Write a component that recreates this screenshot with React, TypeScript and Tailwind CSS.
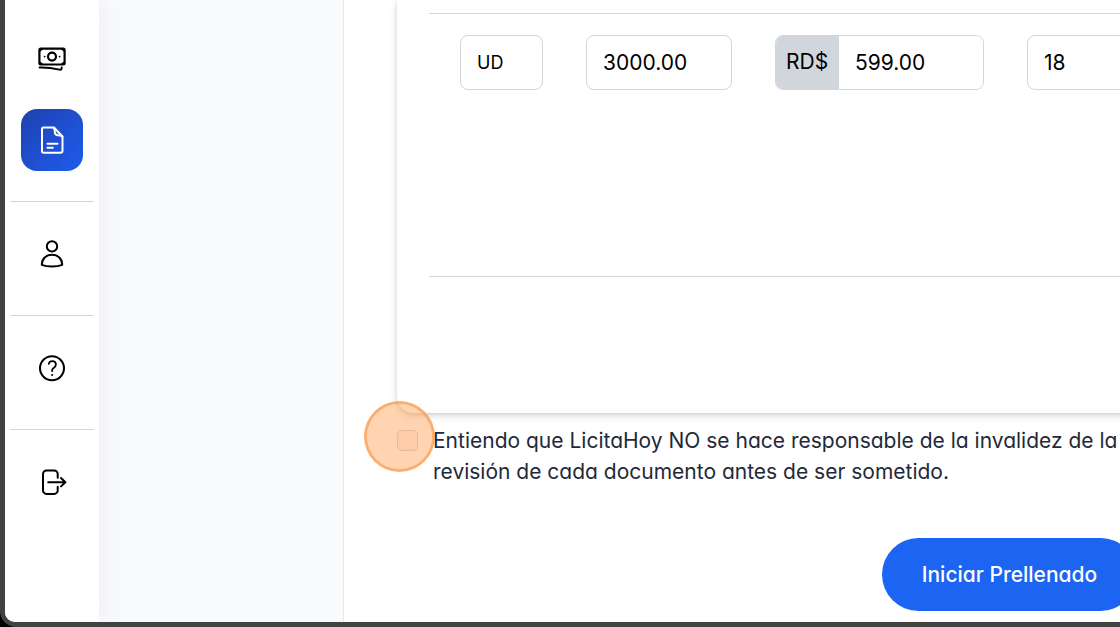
import React from "react";

type IconProps = { children: React.ReactNode };

function Icon({ children }: IconProps) {
  return (
    <svg
      viewBox="0 0 32 32"
      className="size-8"
      fill="none"
      stroke="currentColor"
      strokeWidth="2"
      strokeLinecap="round"
      strokeLinejoin="round"
      aria-hidden="true"
    >
      {children}
    </svg>
  );
}

function BanknotesIcon() {
  return (
    <Icon>
      <rect x="3.4" y="5.7" width="25.2" height="15.8" rx="1.4" strokeWidth="2.2" />
      <path d="M4.2 7.6 6 6.2M27.8 7.6 26 6.2M4.2 19.6 6 21M27.8 19.6 26 21" strokeWidth="1.6" />
      <circle cx="16" cy="13.6" r="4" strokeWidth="2.2" />
      <path d="M8.6 13.6h.01M23.6 13.6h.01" strokeWidth="1.8" />
      <path d="M3.6 24.4c7.6-.2 14 .8 20 2.2 1.300.3 2.100-.3 2.100-1.500v-.5" />
    </Icon>
  );
}

function DocumentIcon() {
  return (
    <Icon>
      <path d="M7.5 3.500H18l8.500 9v14.200a2 2 0 0 1-2 2h-17a1.500 1.500 0 0 1-1.500-1.500V5a1.500 1.500 0 0 1 1.500-1.500Z" />
      <path d="M17.500 3.700c1 1 1.300 2.200 1.300 3.800 0 2.300.9 3.800 3.200 3.800 2 0 3.600.1 4.300 1.400" />
      <path d="M11.500 19.700h10M11.500 23.700h5.400" />
    </Icon>
  );
}

function UserIcon() {
  return (
    <Icon>
      <circle cx="16" cy="8.400" r="5.200" />
      <path d="M5.800 26.800c0-6 4.300-10 10.200-10s10.200 4 10.200 10c-3 1.300-6.500 1.700-10.200 1.700s-7.200-.4-10.200-1.700Z" />
    </Icon>
  );
}

function HelpIcon() {
  return (
    <Icon>
      <circle cx="16" cy="16.300" r="12" />
      <path d="M12.800 11.900c.4-1.800 1.700-2.700 3.400-2.700 2.100 0 3.700 1.400 3.700 3.400 0 1.800-1.200 2.600-2.300 3.400-1 .7-1.500 1.400-1.500 2.600v.5" strokeWidth="1.800" />
      <path d="M16.100 22.900h.01" strokeWidth="2" />
    </Icon>
  );
}

function LogoutIcon() {
  return (
    <Icon>
      <path d="M21.700 11.700V8a3.500 3.500 0 0 0-3.500-3.500h-7.700A3.500 3.500 0 0 0 7 8v16.400a3.500 3.500 0 0 0 3.500 3.500h7.700a3.500 3.500 0 0 0 3.500-3.500v-3.700" />
      <path d="M12.200 16.200h17M25 12l4.400 4.200-4.400 4.200" />
    </Icon>
  );
}

const navLink = "mx-auto flex size-[62px] items-center justify-center rounded-2xl text-black";
const divider = "mt-[30px] mb-[21px] border-gray-300";
const field = "h-[55px] rounded-lg border border-gray-300 bg-white px-4 text-black";

function Sidebar() {
  return (
    <nav aria-label="Principal" className="z-10 w-[94px] shrink-0 bg-white px-[5px] pt-7 shadow-[4px_0_20px_rgba(100,116,139,0.08)]">
      <a href="#pagos" aria-label="Pagos" className={`${navLink} mb-[19px]`}>
        <BanknotesIcon />
      </a>
      <a
        href="#documentos"
        aria-label="Documentos"
        aria-current="page"
        className="mx-auto flex size-[62px] items-center justify-center rounded-2xl bg-linear-to-br from-[#1e40af] to-[#1d5df0] text-white"
      >
        <DocumentIcon />
      </a>
      <hr className={divider} />
      <a href="#perfil" aria-label="Perfil" className={navLink}>
        <UserIcon />
      </a>
      <hr className={divider} />
      <a href="#ayuda" aria-label="Ayuda" className={navLink}>
        <HelpIcon />
      </a>
      <hr className={divider} />
      <a href="#salir" aria-label="Salir" className={navLink}>
        <LogoutIcon />
      </a>
    </nav>
  );
}

function ItemRow() {
  return (
    <div className="flex h-[263px] items-start gap-[43px] border-t border-gray-300 px-[31px] pt-[21px]">
      <input aria-label="Unidad" defaultValue="UD" className={`${field} w-[83px] text-lg`} />
      <input aria-label="Cantidad" defaultValue="3000.00" className={`${field} w-[146px]`} />
      <div className="flex h-[55px] w-[209px] overflow-hidden rounded-lg border border-gray-300">
        <label htmlFor="precio" className="flex w-[63px] shrink-0 items-center bg-gray-300 pb-[2px] pl-[10px] text-black">
          RD$
        </label>
        <input id="precio" defaultValue="599.00" className="w-full min-w-0 bg-white px-4 text-black" />
      </div>
      <input aria-label="ITBIS" defaultValue="18" className={`${field} w-[146px]`} />
    </div>
  );
}

export default function App() {
  return (
    <div className="h-screen overflow-hidden bg-black font-['Inter',sans-serif] text-[21px] leading-[31px] [font-feature-settings:'cv11']">
      <div className="h-full rounded-bl-2xl bg-[#424242] pb-[5px] pl-[5px]">
        <div className="flex h-full overflow-hidden rounded-bl-[10px] bg-white">
          <Sidebar />
          <aside className="w-[245px] shrink-0 border-r border-gray-200 bg-[#f9fafc]" />
          <main className="min-w-0 flex-1 overflow-hidden pl-[53px]">
            <div className="w-[1225px]">
              <section className="rounded-b-2xl bg-white px-8 pt-[13px] shadow-[0_1px_4px_rgba(0,0,0,0.10),0_3px_8px_rgba(0,0,0,0.12)]">
                <ItemRow />
                <div className="h-[137px] border-t border-gray-300" />
              </section>
              <div className="flex gap-[15px] pt-3">
                <div className="relative mt-[5px] size-[21px] shrink-0">
                  <input
                    id="acepto"
                    type="checkbox"
                    className="block size-[21px] appearance-none rounded-[5px] border border-gray-300 bg-[#fff2f2]"
                  />
                  <span className="pointer-events-none absolute -top-[29px] -left-[33px] z-10 size-[71px] rounded-full border-[3px] border-[#f98b33]/70 bg-[#ff943a]/40 bg-clip-padding" />
                </div>
                <label htmlFor="acepto" className="whitespace-nowrap text-gray-800">
                  Entiendo que LicitaHoy NO se hace responsable de la invalidez de la información
                  <br />
                  revisión de cada documento antes de ser sometido.
                </label>
              </div>
              <div className="flex justify-center pt-[51px]">
                <button type="button" className="h-[73px] rounded-full bg-[#1c64f2] px-10 font-medium text-white">
                  Iniciar Prellenado
                </button>
              </div>
            </div>
          </main>
        </div>
      </div>
    </div>
  );
}
